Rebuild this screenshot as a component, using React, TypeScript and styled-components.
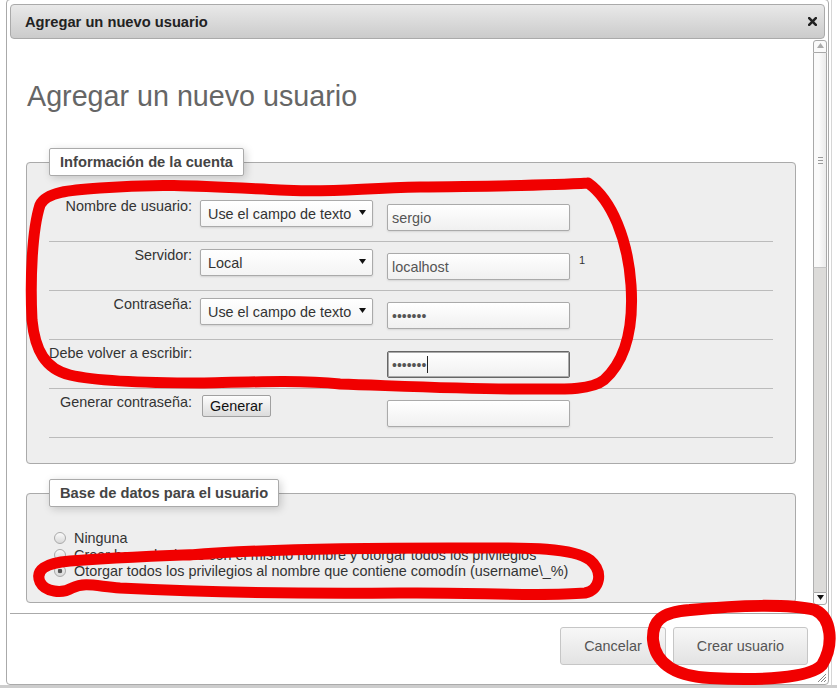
import React from "react";
import styled, { createGlobalStyle } from "styled-components";

const GlobalStyle = createGlobalStyle`
  html, body { margin: 0; padding: 0; background: #fff; }
  body { font-family: "Liberation Sans", Arial, sans-serif; font-size: 14.4px; color: #333; }
  * { box-sizing: border-box; }
`;

const Page = styled.div`
  position: relative;
  width: 837px;
  height: 688px;
  overflow: hidden;
  display: flex;
  flex-direction: column;
  padding-left: 6px;
  background: #fff;
  box-shadow: inset -5px 0 0 #fff, inset -6px 0 0 #d6d6d6;
`;

const Dialog = styled.div`
  position: relative;
  flex: none;
  width: 823px;
  height: 686px;
  margin-top: -1px;
  display: flex;
  flex-direction: column;
  background: #fff;
  border: 1px solid #aaa;
  border-radius: 4px;
`;

const BottomStrip = styled.div`
  flex: 1;
  margin-left: -6px;
  background: #cdcdcd;
`;

const TitleBar = styled.div`
  flex: none;
  height: 35px;
  margin: 4px 3px 0;
  padding: 0 7px 0 14px;
  display: flex;
  align-items: center;
  justify-content: space-between;
  border: 1px solid #aaa;
  border-radius: 4px;
  background: linear-gradient(#e9e9e9, #cbcbcb);
  font-weight: bold;
  font-size: 14.7px;
  color: #222;
`;

const CloseIcon = styled.svg`
  display: block;
  margin-top: -1px;
`;

const ContentRow = styled.div`
  flex: none;
  height: 566px;
  display: flex;
`;

const Main = styled.div`
  flex: 1;
  overflow: hidden;
  padding: 0 17px 0 19px;
`;

const Heading = styled.h2`
  margin: 40px 0 0 1px;
  font-size: 28.7px;
  line-height: 35px;
  font-weight: normal;
  color: #666;
`;

const Fieldset = styled.fieldset<{ $mt: number; $pt: number; $pb: number }>`
  margin: ${(p) => p.$mt}px 0 0;
  padding: ${(p) => p.$pt}px 22px ${(p) => p.$pb}px;
  min-width: 0;
  border: 1px solid #aaa;
  border-radius: 4px;
  background: #eee;
`;

const Legend = styled.legend`
  padding: 5px 10px;
  line-height: 16px;
  font-weight: bold;
  font-size: 14.7px;
  color: #444;
  background: #fff;
  border: 1px solid #aaa;
  border-radius: 2px;
  box-shadow: 2px 2px 8px rgba(0, 0, 0, 0.18);
`;

const Row = styled.div`
  display: grid;
  grid-template-columns: 144px 180px 197px 1fr;
  align-items: start;
  height: 49px;
  border-bottom: 1px solid #bbb;
`;

const Label = styled.div`
  padding-top: 5px;
  padding-right: 1px;
  text-align: right;
  line-height: 16px;
  color: #333;
  white-space: nowrap;
`;

const SelectBox = styled.div`
  margin: 7px 0 0 7px;
  width: 173px;
  height: 27px;
  display: flex;
  align-items: center;
  justify-content: space-between;
  padding: 0 6px 0 7px;
  border: 1px solid #aaa;
  border-radius: 2px;
  background: linear-gradient(#fff, #f4f4f4);
  box-shadow: 0 1px 2px rgba(0, 0, 0, 0.12);
  color: #333;
  white-space: nowrap;
`;

const Arrow = styled.svg`
  display: block;
  flex: none;
  margin-top: -2px;
`;

const TextInput = styled.div<{ $focused?: boolean }>`
  margin: 11px 0 0 14px;
  width: 183px;
  height: 27px;
  display: flex;
  align-items: center;
  padding-left: 4px;
  border: 1px solid ${(p) => (p.$focused ? "#666" : "#aaa")};
  border-radius: 2px;
  background: linear-gradient(#fff, #f0f0f0);
  box-shadow: ${(p) =>
    p.$focused ? "inset 0 0 0 1px #aaa" : "0 1px 2px rgba(0, 0, 0, 0.1)"};
  color: #555;
  white-space: nowrap;
`;

const Dots = styled.span`
  color: #555;
  font-size: 14px;
`;

const Caret = styled.span`
  display: inline-block;
  width: 1px;
  height: 17px;
  margin-left: 1px;
  background: #222;
`;

const Note = styled.sup`
  margin: 12px 0 0 9px;
  font-size: 11px;
  line-height: 13px;
  vertical-align: baseline;
  color: #333;
`;

const SmallButton = styled.button`
  margin: 6px 0 0 9px;
  height: 22px;
  padding: 0 7px;
  border: 1px solid #a0a0a0;
  border-radius: 2px;
  background: linear-gradient(#fdfdfd, #dcdcdc);
  color: #111;
  font-family: inherit;
  font-size: 14.4px;
  line-height: 20px;
`;

const RadioList = styled.div`
  display: flex;
  flex-direction: column;
`;

const RadioItem = styled.div`
  display: flex;
  align-items: center;
  height: 16.5px;
  line-height: 16.5px;
  white-space: nowrap;
  color: #333;
`;

const RadioDot = styled.span<{ $checked?: boolean }>`
  flex: none;
  width: 12px;
  height: 12px;
  margin: 0 8px 0 5px;
  border-radius: 50%;
  border: 1px solid #aaa;
  background: ${(p) =>
    p.$checked
      ? "radial-gradient(circle, #555 0 2px, transparent 2.6px), linear-gradient(#f4f4f4, #d8d8d8)"
      : "linear-gradient(#fafafa, #d9d9d9)"};
`;

const Scrollbar = styled.div`
  flex: none;
  width: 14px;
  margin: 1px 1px 0 0;
  display: flex;
  flex-direction: column;
`;

const ScrollButton = styled.div<{ $down?: boolean }>`
  flex: none;
  height: 13px;
  display: flex;
  align-items: center;
  justify-content: center;
  border: 1px solid #a8a8a8;
  border-radius: ${(p) => (p.$down ? "0 0 3px 3px" : "3px 3px 0 0")};
  background: #fafafa;
`;

const Thumb = styled.div`
  flex: none;
  height: 215px;
  display: flex;
  flex-direction: column;
  align-items: center;
  justify-content: center;
  gap: 2px;
  border-left: 1px solid #a8a8a8;
  border-right: 1px solid #a8a8a8;
  border-bottom: 1px solid #c4c4c4;
  background: linear-gradient(to right, #fafafa 40%, #ebebeb);
`;

const Grip = styled.span`
  width: 5px;
  height: 1px;
  background: #9a9a9a;
`;

const Track = styled.div`
  flex: 1;
  border-left: 1px solid #b0b0b0;
  border-right: 1px solid #b0b0b0;
  background: #dcdbd9;
`;

const ButtonPane = styled.div`
  flex: none;
  margin: 8px 3px 0;
  padding: 13px 17px 0 0;
  display: flex;
  justify-content: flex-end;
  gap: 7px;
  border-top: 1px solid #aaa;
`;

const DialogButton = styled.button`
  height: 38px;
  padding: 0 23px;
  border: 1px solid #c6c6c6;
  border-radius: 3px;
  background: linear-gradient(#f7f7f7, #e3e3e3);
  color: #555;
  font-family: inherit;
  font-size: 14.4px;
`;

const ResizeHandle = styled.svg`
  position: absolute;
  right: 2px;
  bottom: 2px;
`;

const Annotations = styled.svg`
  position: absolute;
  left: 0;
  top: 0;
  pointer-events: none;
  z-index: 10;
`;

const Triangle = ({ color, up }: { color: string; up?: boolean }) => (
  <Arrow width="7" height="5" viewBox="0 0 7 5">
    <polygon points={up ? "0,5 7,5 3.5,0" : "0,0 7,0 3.5,5"} fill={color} />
  </Arrow>
);

export default function App() {
  return (
    <>
      <GlobalStyle />
      <Page>
        <Dialog>
          <TitleBar>
            <span>Agregar un nuevo usuario</span>
            <CloseIcon width="9" height="9" viewBox="0 0 9 9">
              <path d="M1.2 1.2 L7.8 7.8 M7.8 1.2 L1.2 7.8" stroke="#222" strokeWidth="2.6" strokeLinecap="square" />
            </CloseIcon>
          </TitleBar>
          <ContentRow>
            <Main>
              <Heading>Agregar un nuevo usuario</Heading>
              <Fieldset $mt={34} $pt={17} $pb={25}>
                <Legend>Información de la cuenta</Legend>
                <Row>
                  <Label>Nombre de usuario:</Label>
                  <SelectBox>
                    <span>Use el campo de texto</span>
                    <Triangle color="#111" />
                  </SelectBox>
                  <TextInput>sergio</TextInput>
                </Row>
                <Row>
                  <Label>Servidor:</Label>
                  <SelectBox>
                    <span>Local</span>
                    <Triangle color="#111" />
                  </SelectBox>
                  <TextInput>localhost</TextInput>
                  <Note>1</Note>
                </Row>
                <Row>
                  <Label>Contraseña:</Label>
                  <SelectBox>
                    <span>Use el campo de texto</span>
                    <Triangle color="#111" />
                  </SelectBox>
                  <TextInput>
                    <Dots>•••••••</Dots>
                  </TextInput>
                </Row>
                <Row>
                  <Label>Debe volver a escribir:</Label>
                  <span />
                  <TextInput $focused>
                    <Dots>•••••••</Dots>
                    <Caret />
                  </TextInput>
                </Row>
                <Row>
                  <Label>Generar contraseña:</Label>
                  <div>
                    <SmallButton type="button">Generar</SmallButton>
                  </div>
                  <TextInput />
                </Row>
              </Fieldset>
              <Fieldset $mt={15} $pt={23} $pb={22}>
                <Legend>Base de datos para el usuario</Legend>
                <RadioList>
                  <RadioItem>
                    <RadioDot />
                    Ninguna
                  </RadioItem>
                  <RadioItem>
                    <RadioDot />
                    Crear base de datos con el mismo nombre y otorgar todos los privilegios
                  </RadioItem>
                  <RadioItem>
                    <RadioDot $checked />
                    Otorgar todos los privilegios al nombre que contiene comodín (username\_%)
                  </RadioItem>
                </RadioList>
              </Fieldset>
            </Main>
            <Scrollbar>
              <ScrollButton>
                <Triangle color="#aaa" up />
              </ScrollButton>
              <Thumb>
                <Grip />
                <Grip />
                <Grip />
              </Thumb>
              <Track />
              <ScrollButton $down>
                <Triangle color="#111" />
              </ScrollButton>
            </Scrollbar>
          </ContentRow>
          <ButtonPane>
            <DialogButton type="button">Cancelar</DialogButton>
            <DialogButton type="button">Crear usuario</DialogButton>
          </ButtonPane>
          <ResizeHandle width="8" height="8" viewBox="0 0 8 8">
            <path d="M8 0 L0 8 M8 3 L3 8 M8 6 L6 8" stroke="#888" strokeWidth="1" />
          </ResizeHandle>
        </Dialog>
        <BottomStrip />
        <Annotations width="837" height="688" viewBox="0 0 837 688">
          <g fill="none" stroke="#f10000" strokeWidth="11" strokeLinecap="round" strokeLinejoin="round">
            <path d="M588 183 C612 200 628 240 631 285 C634 330 624 362 604 380 C590 391 560 389 520 389 C460 389 400 386 340 384 C300 380 250 382 200 383 C150 383 100 382 70 375 C45 369 35 350 32 320 C30 280 32 230 40 205 C46 192 70 190 100 188 C160 183 200 186 280 190 C330 193 360 188 420 187 C480 186 540 186 588 183" />
            <path d="M190 555 C250 550 350 548 450 548 C520 548 570 546 590 560 C604 572 600 590 585 593 C540 597 470 592 400 593 C300 594 200 592 120 588 C95 586 85 582 72 588 C62 594 45 592 40 582 C35 570 45 563 70 561 C110 558 150 556 210 554" />
            <path d="M690 610 C740 605 790 604 815 610 C832 618 834 645 822 665 C810 678 760 681 710 678 C670 676 655 660 653 640 C652 622 660 612 690 610" strokeWidth="12" />
          </g>
        </Annotations>
      </Page>
    </>
  );
}
